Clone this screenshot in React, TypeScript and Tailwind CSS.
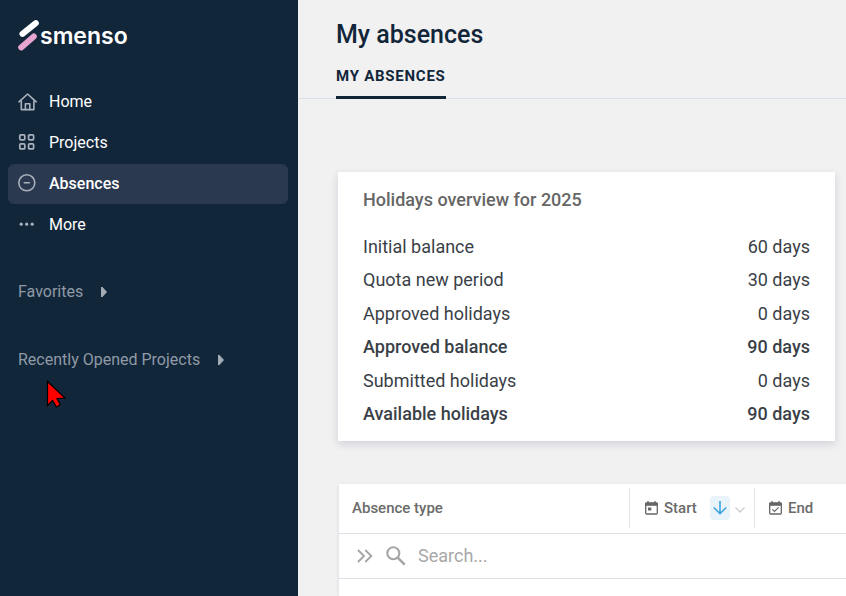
import { useState } from "react";
import clsx from "clsx";

const navItems = [
  { name: "Home", icon: <HomeIcon /> },
  { name: "Projects", icon: <ProjectsIcon /> },
  { name: "Absences", icon: <AbsencesIcon /> },
  { name: "More", icon: <MoreIcon /> },
];

const overview = [
  { label: "Initial balance", days: 60 },
  { label: "Quota new period", days: 30 },
  { label: "Approved holidays", days: 0 },
  { label: "Approved balance", days: 90, total: true },
  { label: "Submitted holidays", days: 0 },
  { label: "Available holidays", days: 90, total: true },
];

function HomeIcon() {
  return (
    <svg width="20" height="20" viewBox="0 0 20 20" fill="none" stroke="currentColor" strokeWidth="1.6" strokeLinecap="round" strokeLinejoin="round">
      <path d="M1 9.8 9.6 2l8.6 7.8" />
      <path d="M3.3 9v8.6h12.6V9" />
      <path d="M7.4 17.6v-5.8h4.4v5.8" />
    </svg>
  );
}

function ProjectsIcon() {
  return (
    <svg width="20" height="20" viewBox="0 0 20 20" fill="none" stroke="currentColor" strokeWidth="1.7">
      <rect x="1.8" y="1.8" width="5" height="5" rx="1" />
      <rect x="10.6" y="1.8" width="5" height="5" rx="1" />
      <rect x="1.8" y="10.9" width="5" height="5" rx="1" />
      <rect x="10.6" y="10.9" width="5" height="5" rx="1" />
    </svg>
  );
}

function AbsencesIcon() {
  return (
    <svg width="20" height="20" viewBox="0 0 20 20" fill="none" stroke="currentColor" strokeWidth="1.6" strokeLinecap="round">
      <circle cx="8.8" cy="8.8" r="8" />
      <path d="M6.3 8.8h5" />
    </svg>
  );
}

function MoreIcon() {
  return (
    <svg width="20" height="20" viewBox="0 0 20 20" fill="currentColor">
      <circle cx="3.2" cy="9.2" r="1.6" />
      <circle cx="8.7" cy="9.2" r="1.6" />
      <circle cx="14.2" cy="9.2" r="1.6" />
    </svg>
  );
}

function Logo() {
  return (
    <a href="#" className="flex items-center px-[18px] text-white">
      <svg width="22" height="34" viewBox="0 0 22 34" fill="none" strokeLinecap="round">
        <path d="M4.5 14.8 17.8 4.2" stroke="#ffffff" strokeWidth="6" />
        <path d="M3.2 28.4 15.8 17.4" stroke="#e6a6cf" strokeWidth="6" />
      </svg>
      <span className="font-[Inter,sans-serif] text-[23px] leading-8 font-semibold">
        smenso
      </span>
    </a>
  );
}

function SectionToggle({ label }: { label: string }) {
  const [isOpen, setOpen] = useState(false);

  return (
    <button
      type="button"
      aria-expanded={isOpen}
      onClick={() => setOpen(!isOpen)}
      className="flex items-center gap-[18px] px-[18px] text-base leading-6 text-[#8f9aa6]"
    >
      {label}
      <svg width="6" height="10" viewBox="0 0 6 10" fill="#a3abb5">
        <path d="M0 0h1.5L6 5 1.5 10H0z" />
      </svg>
    </button>
  );
}

function Sidebar() {
  const [active, setActive] = useState("Absences");

  return (
    <aside className="relative w-[298px] shrink-0 bg-[#12263a] pt-[19px]">
      <Logo />
      <nav className="mt-[29px] flex flex-col gap-px px-2">
        {navItems.map((item) => (
          <a
            key={item.name}
            href="#"
            onClick={() => setActive(item.name)}
            className={clsx(
              "mr-0.5 flex h-10 items-center gap-[11px] rounded-md px-2.5 text-base text-white",
              active === item.name && "bg-[#2a394f] font-medium"
            )}
          >
            <span className="text-[#a9b2bc]">{item.icon}</span>
            {item.name}
          </a>
        ))}
      </nav>
      <div className="mt-[35px] flex flex-col items-start gap-11">
        <SectionToggle label="Favorites" />
        <SectionToggle label="Recently Opened Projects" />
      </div>
      {/* mouse pointer */}
      <svg className="absolute top-[380px] left-[46px]" width="22" height="28" viewBox="0 0 22 28">
        <path
          d="M1.5 1.5v24l5.2-5 3.6 6.5 4-2.2-3.3-6.3 8-.5z"
          fill="#fe0000"
          stroke="#000000"
          strokeWidth="1.2"
        />
      </svg>
    </aside>
  );
}

function HolidaysOverview() {
  return (
    <section className="mr-[11px] ml-10 bg-white px-[25px] pt-4 pb-2.5 shadow-[0_3px_8px_rgba(40,40,90,0.16)]">
      <h2 className="text-lg leading-6 font-medium text-[#666666]">
        Holidays overview for 2025
      </h2>
      <table className="mt-[18px] h-[201px] w-full text-lg leading-6 text-[#3a3f47]">
        <tbody>
          {overview.map((row) => (
            <tr key={row.label}>
              <th
                scope="row"
                className={clsx("p-0 text-left", row.total ? "font-medium" : "font-normal")}
              >
                {row.label}
              </th>
              <td className={clsx("p-0 text-right", row.total && "font-medium")}>
                {row.days} days
              </td>
            </tr>
          ))}
        </tbody>
      </table>
    </section>
  );
}

function AbsenceTable() {
  return (
    <div className="ml-[41px] flex-1 bg-white shadow-[0_1px_4px_rgba(40,40,90,0.1)]">
      <table className="w-full table-fixed text-[15px] leading-6 text-[#6b6b6b]">
        <thead>
          <tr className="h-[49px] border-b border-[#dfe0e5]">
            <th className="w-[291px] p-0 text-left font-medium">
              <div className="flex h-10 items-center border-r border-[#e4e4e6] px-[13px]">
                Absence type
              </div>
            </th>
            <th className="w-[125px] p-0 text-left font-medium">
              <div className="flex h-10 items-center border-r border-[#e4e4e6] pl-[15px]">
                <svg width="13" height="14" viewBox="0 0 13 14" fill="none" stroke="#666666" strokeWidth="1.3">
                  <rect x=".7" y="2" width="11.6" height="11" rx="1" />
                  <path d="M0 3.3h13" strokeWidth="3" />
                  <path d="M3 0v3M10 0v3" />
                  <path d="M3 6.5h3.3v3H3z" fill="#666666" stroke="none" />
                </svg>
                <span className="ml-1.5">Start</span>
                <button
                  type="button"
                  aria-label="Sort ascending"
                  className="ml-[13px] flex h-6 w-5 items-center justify-center rounded-sm bg-[#e8f3fa]"
                >
                  <svg width="14" height="14" viewBox="0 0 14 14" fill="none" stroke="#3fa3df" strokeWidth="1.6">
                    <path d="M7 0v12.5M.8 6.5 7 12.7l6.2-6.2" />
                  </svg>
                </button>
                <button type="button" aria-label="Column menu" className="ml-[5px] pt-1">
                  <svg width="10" height="6" viewBox="0 0 10 6" fill="none" stroke="#cccccc" strokeWidth="1.3">
                    <path d="M.5.5 5 5 9.5.5" />
                  </svg>
                </button>
              </div>
            </th>
            <th className="p-0 text-left font-medium">
              <div className="flex h-10 items-center pl-3.5">
                <svg width="13" height="14" viewBox="0 0 13 14" fill="none" stroke="#666666" strokeWidth="1.3">
                  <rect x=".7" y="2" width="11.6" height="11" rx="1" />
                  <path d="M0 3.3h13" strokeWidth="3" />
                  <path d="M3 0v3M10 0v3" />
                  <path d="m3.3 8.3 2.2 2.2L9.7 6.3" strokeWidth="1.1" />
                </svg>
                <span className="ml-1.5">End</span>
              </div>
            </th>
          </tr>
        </thead>
        <tbody>
          <tr className="h-[45px] border-b border-[#dfe0e5]">
            <td colSpan={3} className="p-0">
              <div className="flex items-center pl-[18px]">
                <button type="button" aria-label="Expand">
                  <svg width="16" height="14" viewBox="0 0 16 14" fill="none" stroke="#a6a6a9" strokeWidth="1.9">
                    <path d="M1 1l6 6-6 6M8.3 1l6 6-6 6" />
                  </svg>
                </button>
                <label htmlFor="search" className="ml-[13px]">
                  <svg width="20" height="20" viewBox="0 0 20 20" fill="none" stroke="#a6a6a9" strokeWidth="2.1">
                    <circle cx="7.3" cy="7.3" r="6" />
                    <path d="m11.7 11.7 7 7" strokeWidth="2.6" />
                  </svg>
                </label>
                <input
                  id="search"
                  type="text"
                  aria-label="Search"
                  placeholder="Search..."
                  className="ml-3 min-w-0 flex-1 text-lg leading-6 outline-none placeholder:text-[#a8a8a8]"
                />
              </div>
            </td>
          </tr>
        </tbody>
      </table>
    </div>
  );
}

const App: React.FC = () => {
  return (
    <div className="flex h-screen overflow-hidden font-[Roboto,sans-serif]">
      <Sidebar />
      <main className="flex min-w-0 flex-1 flex-col bg-[#f1f1f2]">
        <header className="border-b border-[#d6e0ea] pt-[19px] pl-[38px] text-[#12263a]">
          <h1 className="text-[25px] leading-8 font-medium">My absences</h1>
          <div className="mt-[15px] -mb-px flex">
            <a
              href="#"
              className="border-b-3 border-[#12263a] pb-2.5 text-[15px] leading-5 font-bold tracking-wider"
            >
              MY ABSENCES
            </a>
          </div>
        </header>
        <div className="flex flex-1 flex-col gap-[43px] pt-[73px]">
          <HolidaysOverview />
          <AbsenceTable />
        </div>
      </main>
    </div>
  );
};

export default App;
